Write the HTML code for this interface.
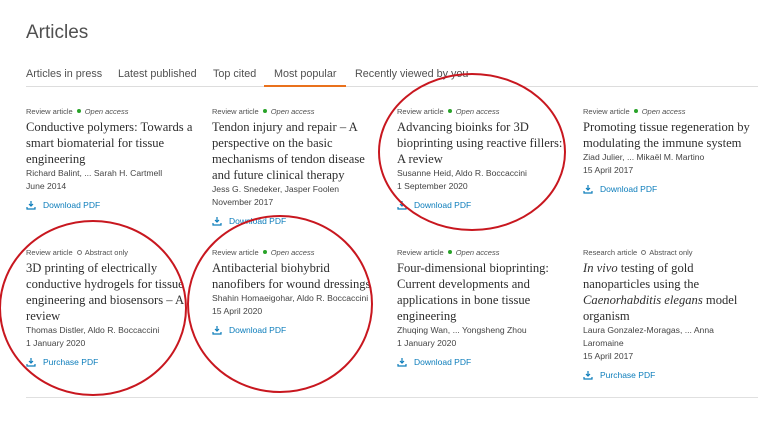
<!DOCTYPE html>
<html><head><meta charset="utf-8"><style>
*{margin:0;padding:0;box-sizing:border-box}
body{width:768px;height:432px;background:#fff;position:relative;overflow:hidden;font-family:"Liberation Sans",sans-serif;color:#2e2e2e}
h1{position:absolute;left:26px;top:22px;font-size:19px;font-weight:normal;color:#505050}
.tabs{position:absolute;left:26px;top:68px;font-size:10.8px;color:#505050}
.tabs span{position:absolute;white-space:nowrap}
.tl{position:absolute;left:26px;top:86px;width:732px;height:1px;background:#ddd}
.ul{position:absolute;left:264px;top:85px;width:82px;height:2px;background:#e9711c}
.card{position:absolute;width:170px}
.lab{font-size:7.5px;color:#505050;height:12px;white-space:nowrap}
.lab i{font-style:italic}
.dot{display:inline-block;width:4px;height:4px;border-radius:50%;background:#29a329;margin:0 4px 1px}
.odot{display:inline-block;width:5px;height:5px;border-radius:50%;border:1px solid #777;margin:0 3px 0 4px}
.t{font-family:"Liberation Serif",serif;font-size:12.6px;line-height:16px;color:#2e2e2e}
.a{font-size:8.6px;line-height:13px;color:#444;width:160px}
.d{font-size:8.5px;color:#0c7dbb;margin-top:7px;display:flex;align-items:center}
.d svg{margin-right:7px}
.bl{position:absolute;left:26px;top:397px;width:732px;height:1px;background:#e0e0e0}
svg.c{position:absolute;left:0;top:0}
</style></head><body>
<h1>Articles</h1>
<div class="tabs">
<span style="left:0">Articles in press</span><span style="left:92px">Latest published</span><span style="left:187px">Top cited</span><span style="left:248px">Most popular</span><span style="left:329px">Recently viewed by you</span>
</div>
<div class="tl"></div><div class="ul"></div>

<div class="card" style="left:26px;top:107px">
<div class="lab">Review article<span class="dot"></span><i>Open access</i></div>
<div class="t">Conductive polymers: Towards a smart biomaterial for tissue engineering</div>
<div class="a">Richard Balint, ... Sarah H. Cartmell<br>June 2014</div>
<div class="d"><svg width="10" height="9" viewBox="0 0 10 9"><path d="M5 0v5M3 3l2 2 2-2M1 6v2h8V6" stroke="#0c7dbb" fill="none" stroke-width="1.2"/></svg>Download PDF</div>
</div>
<div class="card" style="left:212px;top:107px">
<div class="lab">Review article<span class="dot"></span><i>Open access</i></div>
<div class="t">Tendon injury and repair – A perspective on the basic mechanisms of tendon disease and future clinical therapy</div>
<div class="a">Jess G. Snedeker, Jasper Foolen<br>November 2017</div>
<div class="d"><svg width="10" height="9" viewBox="0 0 10 9"><path d="M5 0v5M3 3l2 2 2-2M1 6v2h8V6" stroke="#0c7dbb" fill="none" stroke-width="1.2"/></svg>Download PDF</div>
</div>
<div class="card" style="left:397px;top:107px">
<div class="lab">Review article<span class="dot"></span><i>Open access</i></div>
<div class="t">Advancing bioinks for 3D<br>bioprinting using reactive fillers: A review</div>
<div class="a">Susanne Heid, Aldo R. Boccaccini<br>1 September 2020</div>
<div class="d"><svg width="10" height="9" viewBox="0 0 10 9"><path d="M5 0v5M3 3l2 2 2-2M1 6v2h8V6" stroke="#0c7dbb" fill="none" stroke-width="1.2"/></svg>Download PDF</div>
</div>
<div class="card" style="left:583px;top:107px">
<div class="lab">Review article<span class="dot"></span><i>Open access</i></div>
<div class="t">Promoting tissue regeneration by modulating the immune system</div>
<div class="a">Ziad Julier, ... Mikaël M. Martino<br>15 April 2017</div>
<div class="d"><svg width="10" height="9" viewBox="0 0 10 9"><path d="M5 0v5M3 3l2 2 2-2M1 6v2h8V6" stroke="#0c7dbb" fill="none" stroke-width="1.2"/></svg>Download PDF</div>
</div>

<div class="card" style="left:26px;top:248px">
<div class="lab">Review article<span class="odot"></span>Abstract only</div>
<div class="t">3D printing of electrically conductive hydrogels for tissue engineering and biosensors – A review</div>
<div class="a">Thomas Distler, Aldo R. Boccaccini<br>1 January 2020</div>
<div class="d"><svg width="10" height="9" viewBox="0 0 10 9"><path d="M5 0v5M3 3l2 2 2-2M1 6v2h8V6" stroke="#0c7dbb" fill="none" stroke-width="1.2"/></svg>Purchase PDF</div>
</div>
<div class="card" style="left:212px;top:248px">
<div class="lab">Review article<span class="dot"></span><i>Open access</i></div>
<div class="t">Antibacterial biohybrid<br>nanofibers for wound dressings</div>
<div class="a" style="width:170px">Shahin Homaeigohar, Aldo R. Boccaccini<br>15 April 2020</div>
<div class="d"><svg width="10" height="9" viewBox="0 0 10 9"><path d="M5 0v5M3 3l2 2 2-2M1 6v2h8V6" stroke="#0c7dbb" fill="none" stroke-width="1.2"/></svg>Download PDF</div>
</div>
<div class="card" style="left:397px;top:248px">
<div class="lab">Review article<span class="dot"></span><i>Open access</i></div>
<div class="t">Four-dimensional bioprinting: Current developments and applications in bone tissue engineering</div>
<div class="a">Zhuqing Wan, ... Yongsheng Zhou<br>1 January 2020</div>
<div class="d"><svg width="10" height="9" viewBox="0 0 10 9"><path d="M5 0v5M3 3l2 2 2-2M1 6v2h8V6" stroke="#0c7dbb" fill="none" stroke-width="1.2"/></svg>Download PDF</div>
</div>
<div class="card" style="left:583px;top:248px">
<div class="lab">Research article<span class="odot"></span>Abstract only</div>
<div class="t"><i>In vivo</i> testing of gold<br>nanoparticles using the <i>Caenorhabditis elegans</i> model organism</div>
<div class="a">Laura Gonzalez-Moragas, ... Anna<br>Laromaine<br>15 April 2017</div>
<div class="d"><svg width="10" height="9" viewBox="0 0 10 9"><path d="M5 0v5M3 3l2 2 2-2M1 6v2h8V6" stroke="#0c7dbb" fill="none" stroke-width="1.2"/></svg>Purchase PDF</div>
</div>

<div class="bl"></div>
<svg class="c" width="768" height="432">
<g fill="none" stroke="#c8171f" stroke-width="2">
<ellipse cx="472" cy="152" rx="93" ry="78"/>
<ellipse cx="93" cy="308" rx="93" ry="87"/>
<ellipse cx="280" cy="304" rx="92" ry="88"/>
</g>
</svg>
</body></html>
